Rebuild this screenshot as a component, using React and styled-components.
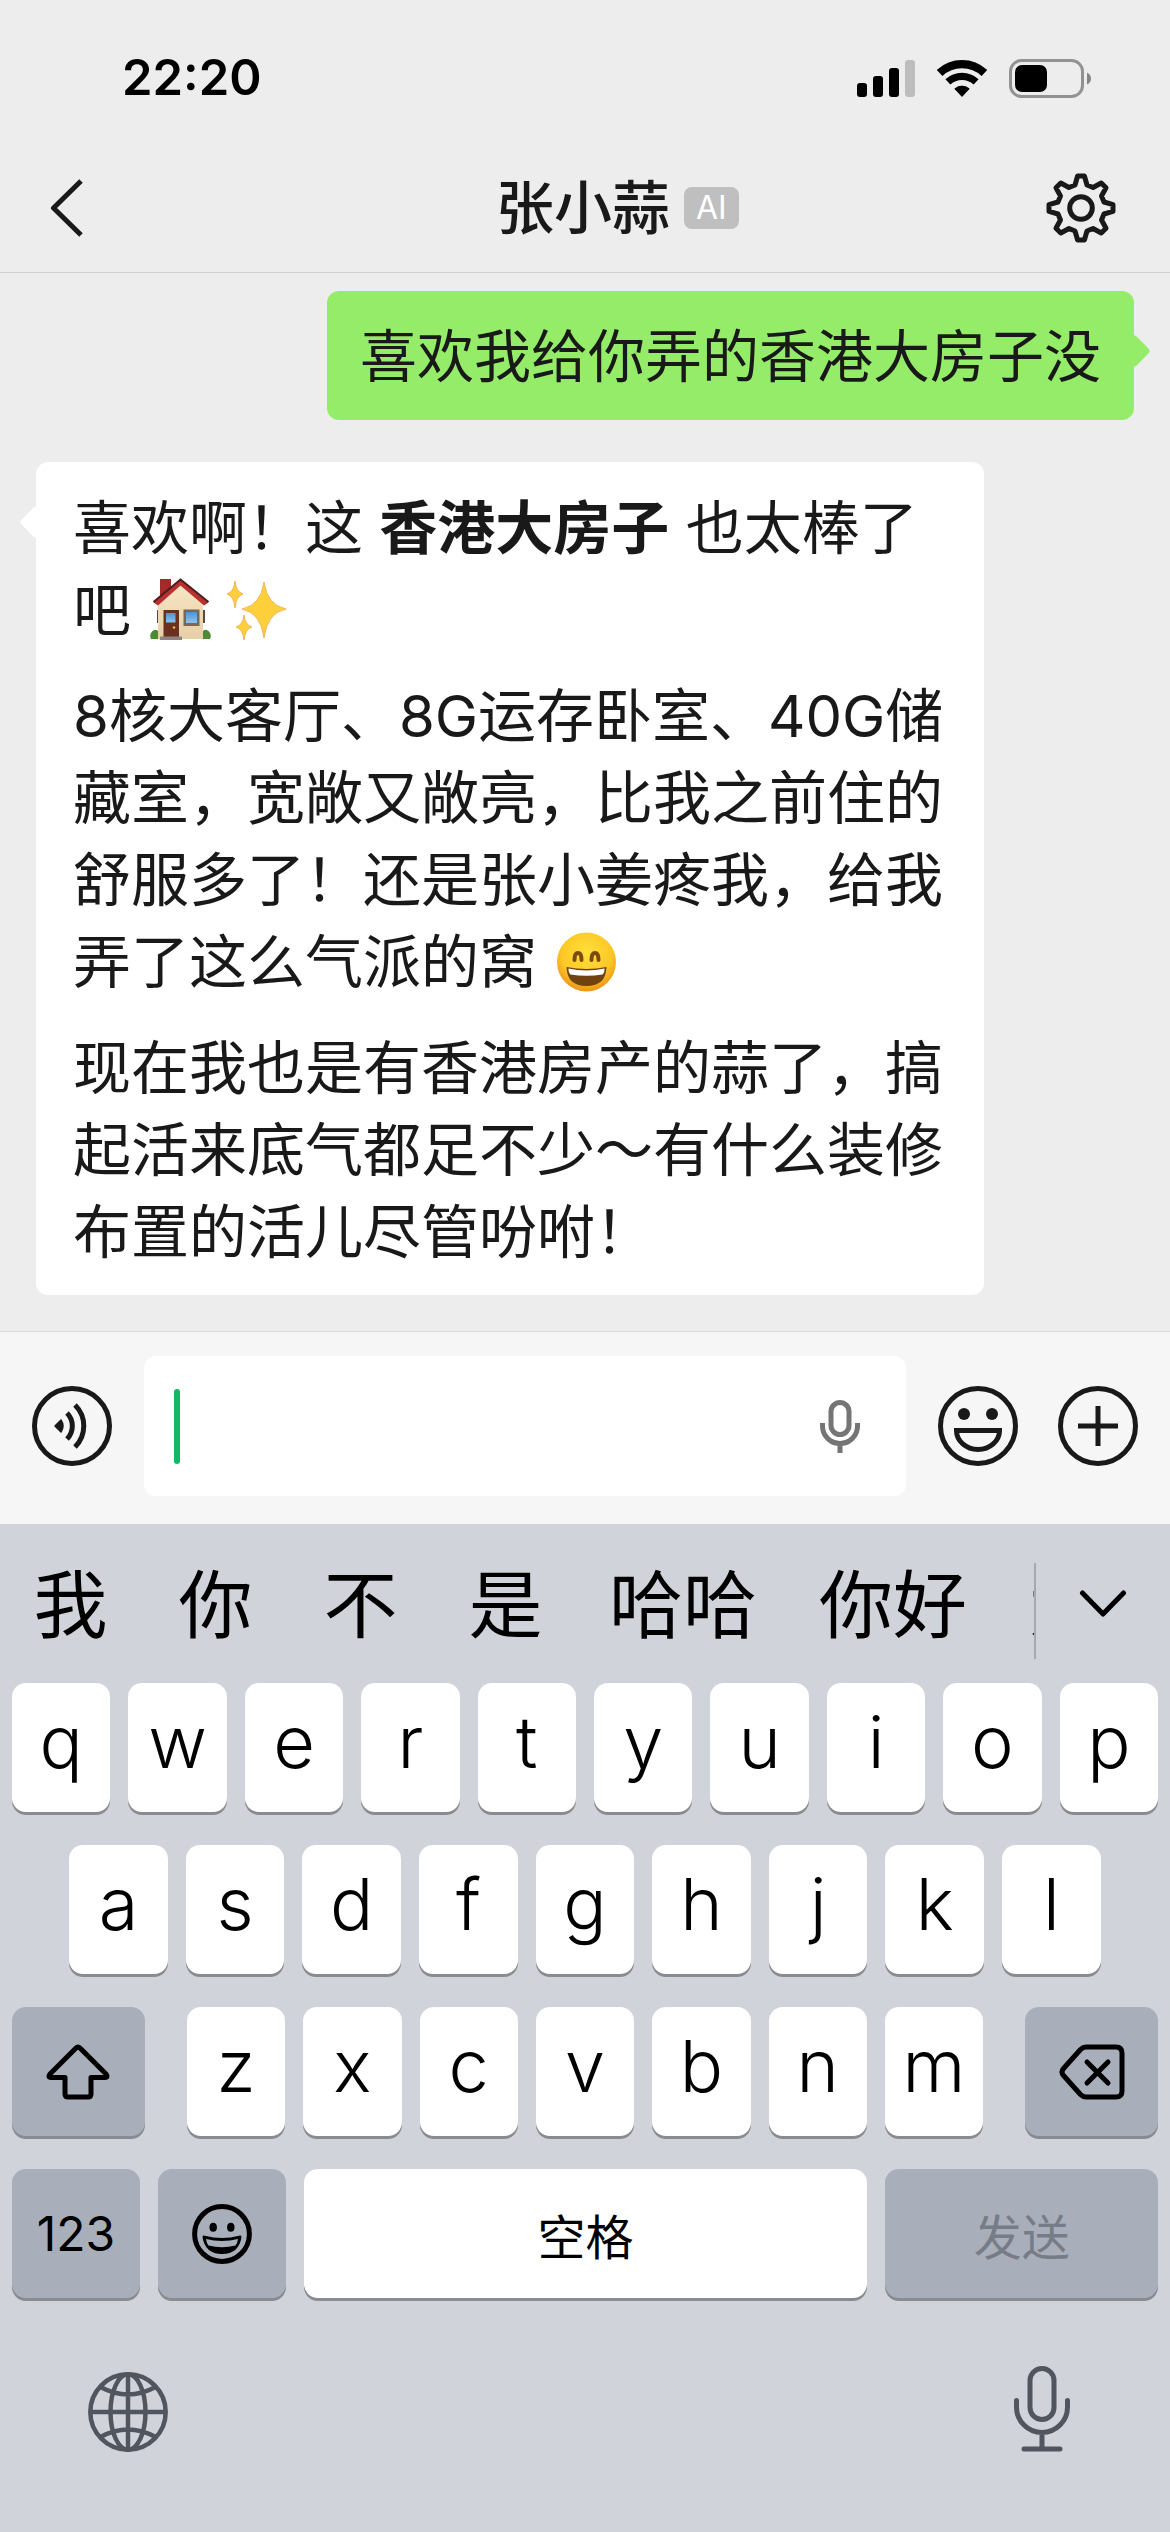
import React, { useState } from 'react';
import styled, { createGlobalStyle } from 'styled-components';

const GlobalStyle = createGlobalStyle`
  * {
    box-sizing: border-box;
  }

  body {
    margin: 0;
    background: #ededed;
    font-family: Inter, 'Noto Sans CJK SC', sans-serif;
    color: #191919;
  }

  button {
    display: flex;
    align-items: center;
    justify-content: center;
    flex: none;
    padding: 0;
    border: 0;
    background: none;
    color: inherit;
    font-family: inherit;
  }

  svg {
    display: block;
    flex: none;
  }
`;

const Screen = styled.div`
  display: flex;
  flex-direction: column;
  min-height: 100vh;
`;

const Header = styled.header`
  border-bottom: 1px solid #d0d0d0;
`;

const StatusBar = styled.div`
  display: flex;
  align-items: center;
  justify-content: space-between;
  height: 144px;
  padding: 12px 79px 0 122px;
  color: #000000;
`;

const Time = styled.time`
  font-size: 49px;
  font-weight: 600;
  line-height: 60px;
`;

const StatusIcons = styled.div`
  display: flex;
  align-items: center;
  gap: 22px;
`;

const NavBar = styled.nav`
  display: grid;
  grid-template-columns: 1fr auto 1fr;
  align-items: center;
  height: 128px;
  padding: 0 54px 0 50px;
`;

const BackButton = styled.button`
  justify-self: start;
`;

const Title = styled.h1`
  margin: 0;
  font-size: 58px;
  font-weight: 500;
  line-height: 80px;
`;

const NavEnd = styled.div`
  display: flex;
  align-items: center;
  justify-content: space-between;
  padding-left: 14px;
`;

const Badge = styled.span`
  padding: 0 12px;
  border-radius: 8px;
  background: #bfbfbf;
  color: #ffffff;
  font-size: 32px;
  line-height: 42px;
`;

const Chat = styled.main`
  display: flex;
  flex: 1;
  flex-direction: column;
  align-items: flex-start;
  gap: 42px;
  padding: 18px 36px 36px;
`;

const Bubble = styled.div`
  position: relative;
  align-self: ${({ $mine }) => ($mine ? 'flex-end' : 'flex-start')};
  max-width: calc(100% - 150px);
  padding: ${({ $mine }) => ($mine ? '25px 33px 22px' : '25px 37px 22px')};
  border-radius: 12px;
  background: ${({ $mine }) => ($mine ? '#95ec69' : '#ffffff')};
  font-size: ${({ $mine }) => ($mine ? '57px' : '58px')};
  line-height: 82px;

  &::after {
    content: '';
    position: absolute;
    top: 48px;
    ${({ $mine }) => ($mine ? 'right' : 'left')}: -12px;
    width: 24px;
    height: 24px;
    border-radius: 4px;
    background: inherit;
    transform: rotate(45deg);
  }

  p {
    margin: 0;
  }

  p + p {
    margin-top: 24px;
  }
`;

const Emoji = styled.svg`
  display: inline-block;
  width: 66px;
  height: 66px;
  margin-right: 10px;
  vertical-align: -12px;
`;

const Composer = styled.form`
  display: flex;
  align-items: center;
  gap: 32px;
  padding: 24px 32px 28px;
  border-top: 1px solid #dcdcdc;
  background: #f6f6f6;
`;

const Field = styled.label`
  display: flex;
  flex: 1;
  align-items: center;
  height: 140px;
  min-width: 0;
  padding: 0 46px 0 30px;
  border-radius: 12px;
  background: #ffffff;
`;

const Caret = styled.span`
  flex: none;
  width: 6px;
  height: 75px;
  border-radius: 3px;
  background: #10b963;
`;

const TextInput = styled.input`
  flex: 1;
  min-width: 0;
  height: 100%;
  border: 0;
  outline: 0;
  background: none;
  color: inherit;
  caret-color: transparent;
  font-family: inherit;
  font-size: 56px;
`;

const ComposerActions = styled.div`
  display: flex;
  gap: 40px;
`;

const Keyboard = styled.section`
  background: #d0d3da;
  color: #000000;
`;

const Candidates = styled.div`
  display: flex;
  align-items: center;
  height: 159px;
  padding-top: 2px;
`;

const CandidateList = styled.div`
  display: flex;
  flex: 1;
  min-width: 0;
  margin: 0 -2px;
  overflow: hidden;
`;

const Candidate = styled.button`
  min-width: 145px;
  padding: 0 31px;
  font-size: 74px;
  line-height: 96px;
`;

const Expand = styled.button`
  width: 136px;
  height: 96px;
  margin-top: 12px;
  padding-bottom: 14px;
  border-left: 2px solid #a6a8ad;
`;

const Rows = styled.div`
  display: flex;
  flex-direction: column;
  gap: 33px;
  padding: 0 12px;
`;

const Row = styled.div`
  display: flex;
  gap: 18px;
  padding: ${({ $inset }) => ($inset ? '0 5%' : '0')};
`;

const Letters = styled.div`
  display: flex;
  flex: 797;
  gap: 18px;
  margin: 0 24px;
`;

const Key = styled.button`
  flex: ${({ $span }) => $span || 98} 1 0;
  min-width: 0;
  height: 129px;
  border-radius: 14px;
  background: ${({ $dark }) => ($dark ? '#a9afba' : '#ffffff')};
  box-shadow: 0 3px 0 #898b90;
  font-size: 48px;
  line-height: 80px;

  &:disabled {
    color: #777c87;
  }
`;

const LetterKey = styled(Key)`
  padding-bottom: 12px;
  font-size: 72px;
  font-weight: 300;
`;

const WordKey = styled(Key)`
  padding-top: 8px;
`;

const SystemBar = styled.div`
  display: flex;
  align-items: flex-end;
  justify-content: space-between;
  padding: 68px 88px 80px;
  color: #50555e;

  button {
    width: 80px;
  }
`;

const Signal = () => (
  <svg width="58" height="37" fill="currentColor" aria-hidden="true">
    <rect x="0" y="23" width="10" height="14" rx="3" />
    <rect x="16" y="16" width="10" height="21" rx="3" />
    <rect x="32" y="8" width="10" height="29" rx="3" />
    <rect x="48" y="0" width="10" height="37" rx="3" opacity="0.2" />
  </svg>
);

const Wifi = () => (
  <svg width="50" height="37" fill="none" stroke="currentColor" aria-hidden="true">
    <path d="M2.6 13A32.85 32.85 0 0 1 47.4 13" strokeWidth="8.3" />
    <path d="M10.9 21.9A20.7 20.7 0 0 1 39.1 21.9" strokeWidth="7.3" />
    <path d="M17.8 28.8A11 11 0 0 1 32.2 28.8L25 36.4Z" fill="currentColor" strokeWidth="1" strokeLinejoin="round" />
  </svg>
);

const Battery = () => (
  <svg width="82" height="39" aria-hidden="true">
    <rect x="1.5" y="1.5" width="72" height="36" rx="11" fill="none" stroke="#929292" strokeWidth="3" />
    <rect x="6" y="6" width="32" height="27" rx="7" />
    <path d="M78 13.5Q82 15.5 82 19.5T78 25.5Z" fill="#858585" />
  </svg>
);

const BackIcon = () => (
  <svg width="34" height="58" fill="none" stroke="currentColor" strokeWidth="5" strokeLinejoin="round" aria-hidden="true">
    <path d="M31 2L3.5 29L31 56" />
  </svg>
);

// outline of one tooth, repeated every 45 degrees around the hub
const tooth = [[-6, -23], [-3.4, -32], [3.4, -32], [6, -23]];
const gearPoints = Array.from({ length: 8 }, (_, i) => {
  const a = (i * Math.PI) / 4;
  return tooth
    .map(([x, y]) => `${(x * Math.cos(a) - y * Math.sin(a)).toFixed(2)},${(x * Math.sin(a) + y * Math.cos(a)).toFixed(2)}`)
    .join(' ');
}).join(' ');

const GearIcon = () => (
  <svg width="70" height="70" viewBox="-35 -35 70 70" fill="none" stroke="currentColor" strokeWidth="5" strokeLinejoin="round" aria-hidden="true">
    <polygon points={gearPoints} />
    <circle r="11.3" />
  </svg>
);

const VoiceIcon = () => (
  <svg width="80" height="80" fill="none" stroke="currentColor" strokeWidth="5" aria-hidden="true">
    <circle cx="40" cy="40" r="37.5" />
    <path d="M23 40L29 34Q33 40 29 46Z" fill="currentColor" strokeWidth="1.5" strokeLinejoin="round" />
    <path d="M35 27A18.5 18.5 0 0 1 35 53M43 19A29.5 29.5 0 0 1 43 61" />
  </svg>
);

const SmileIcon = () => (
  <svg width="80" height="80" fill="none" stroke="currentColor" strokeWidth="5" aria-hidden="true">
    <circle cx="40" cy="40" r="37.5" />
    <circle cx="26" cy="28" r="6" fill="currentColor" stroke="none" />
    <circle cx="54" cy="28" r="6" fill="currentColor" stroke="none" />
    <path d="M18.5 44.5H61.5A21.5 19 0 0 1 18.5 44.5Z" />
  </svg>
);

const PlusIcon = () => (
  <svg width="80" height="80" fill="none" stroke="currentColor" strokeWidth="5" aria-hidden="true">
    <circle cx="40" cy="40" r="37.5" />
    <path d="M40 20V60M20 40H60" />
  </svg>
);

const FieldMicIcon = () => (
  <svg width="40" height="53" fill="none" stroke="#757575" strokeWidth="5" aria-hidden="true">
    <rect x="11" y="2.5" width="18" height="32" rx="9" />
    <path d="M2.5 23V26A17.5 17.5 0 0 0 37.5 26V23M20 44V53" />
  </svg>
);

const ChevronIcon = () => (
  <svg width="48" height="30" fill="none" stroke="currentColor" strokeWidth="5" strokeLinecap="round" strokeLinejoin="round" aria-hidden="true">
    <path d="M3.5 4L24 25L44.5 4" />
  </svg>
);

const ShiftIcon = () => (
  <svg width="64" height="56" fill="none" stroke="currentColor" strokeWidth="5" strokeLinejoin="round" aria-hidden="true">
    <path d="M30 4Q32 2 34 4L60 30Q62.5 33.5 59 33.5H45V50Q45 53 42 53H22Q19 53 19 50V33.5H5Q1.5 33.5 4 30Z" />
  </svg>
);

const BackspaceIcon = () => (
  <svg width="66" height="56" fill="none" stroke="currentColor" strokeWidth="5" strokeLinecap="round" strokeLinejoin="round" aria-hidden="true">
    <path d="M27 3H57Q63 3 63 9V47Q63 53 57 53H27Q24 53 21.5 50.5L4.5 31.5Q1.5 28 4.5 24.5L21.5 5.5Q24 3 27 3Z" />
    <path d="M28 18L49 39M49 18L28 39" />
  </svg>
);

const EmojiKeyIcon = () => (
  <svg width="60" height="60" aria-hidden="true">
    <circle cx="30" cy="30" r="27.4" fill="none" stroke="currentColor" strokeWidth="5" />
    <ellipse cx="21.2" cy="23.3" rx="3.7" ry="4.5" />
    <ellipse cx="38.8" cy="23.3" rx="3.7" ry="4.5" />
    <path d="M10.5 33Q10.5 31 13 31.7Q30 36.5 47 31.7Q49.5 31 49.5 33Q47 50 30 50Q13 50 10.5 33Z" />
    <path d="M14 35Q30 39 46 35Q45.5 39 43.5 41.5Q30 45 16.5 41.5Q14.5 39 14 35Z" fill="#a9afba" />
  </svg>
);

const GlobeIcon = () => (
  <svg width="80" height="80" fill="none" stroke="currentColor" strokeWidth="4.5" aria-hidden="true">
    <circle cx="40" cy="40" r="37.7" />
    <ellipse cx="40" cy="40" rx="17.5" ry="37.7" />
    <path d="M40 2V78M2 40H78M12.5 15Q40 30 67.5 15M12.5 65Q40 50 67.5 65" />
  </svg>
);

const DictationIcon = () => (
  <svg width="56" height="86" fill="none" stroke="currentColor" strokeWidth="5" strokeLinecap="round" aria-hidden="true">
    <rect x="16" y="2.5" width="24" height="51" rx="12" />
    <path d="M2.5 34.5V41A25.5 25.5 0 0 0 53.5 41V34.5M28 67V83M10 83H46" />
  </svg>
);

const House = () => (
  <Emoji viewBox="0 0 66 66" role="img" aria-label="🏠">
    <defs>
      <linearGradient id="wall" x1="0" y1="0" x2="0" y2="1">
        <stop offset="0" stopColor="#f8e6c4" />
        <stop offset="1" stopColor="#e6cfa6" />
      </linearGradient>
      <linearGradient id="glass" x1="0" y1="0" x2="0" y2="1">
        <stop offset="0" stopColor="#4a94d8" />
        <stop offset="1" stopColor="#8cc3ee" />
      </linearGradient>
    </defs>
    <path d="M13 2H24V16L13 24Z" fill="#a32a29" />
    <path d="M10 33H12V46H10ZM56 33H58V46H56Z" fill="#5a473d" />
    <path d="M11 62V22L33.5 5L56 22V62Z" fill="url(#wall)" />
    <path d="M33.5 2L61.5 25.5L57 28.5L33.5 8.5L11 28.5L6.5 25.5Z" fill="#b8302f" />
    <path d="M6.5 25L33.5 2.5L61.5 25" fill="none" stroke="#4d1c1d" strokeWidth="2" />
    <rect x="16.5" y="33" width="15.5" height="27" fill="#6b3020" />
    <rect x="19" y="36" width="9.5" height="9.5" fill="url(#glass)" />
    <circle cx="27" cy="50.5" r="1.3" fill="#f0b840" />
    <rect x="36.5" y="32.5" width="16" height="16.5" fill="#7d6752" />
    <rect x="39" y="35" width="11" height="11" fill="url(#glass)" />
    <rect x="13" y="59.5" width="22" height="3.5" fill="#8e8580" />
    <path d="M4 62Q2 58 5 54.5Q8 51.5 11 54V62ZM56 62V54Q59 51.5 62 54.5Q65 58 63 62Z" fill="#4d8a35" />
  </Emoji>
);

const Sparkles = () => (
  <Emoji viewBox="0 0 66 66" role="img" aria-label="✨">
    <g fill="#fdcf3a" stroke="#f3b552" strokeWidth="1">
      <path d="M41 5Q44 28 63 32Q44 36 41 61Q38 36 19 32Q38 28 41 5Z" />
      <path d="M12 4Q13 15 20 17Q13 19 12 31Q11 19 4 17Q11 15 12 4Z" />
      <path d="M21 38Q22 48 29 50Q22 52 21 63Q20 52 13 50Q20 48 21 38Z" />
    </g>
  </Emoji>
);

const Grin = () => (
  <Emoji viewBox="0 0 66 66" role="img" aria-label="😄">
    <defs>
      <radialGradient id="face" cx="0.5" cy="0.35" r="0.65">
        <stop offset="0" stopColor="#ffe03b" />
        <stop offset="0.65" stopColor="#fdc827" />
        <stop offset="1" stopColor="#eb9416" />
      </radialGradient>
    </defs>
    <circle cx="33.5" cy="33" r="29.5" fill="url(#face)" />
    <path d="M21.5 31Q21.5 24 25 24T28.5 31M38.5 31Q38.5 24 42 24T45.5 31" fill="none" stroke="#7c4a0c" strokeWidth="4" strokeLinecap="round" />
    <path d="M13.5 38Q33.5 42 53.5 38Q53 57 33.5 57T13.5 38Z" fill="#70420f" />
    <path d="M15.5 39.5Q33.5 43.5 51.5 39.5Q51.5 44 49.5 45.5Q33.5 48 17.5 45.5Q15.5 44 15.5 39.5Z" fill="#ffffff" />
  </Emoji>
);

const candidates = ['我', '你', '不', '是', '哈哈', '你好', '大家'];

const renderKeys = (letters) =>
  letters.split('').map((letter) => (
    <LetterKey key={letter} type="button">{letter}</LetterKey>
  ));

const App = () => {
  const [message, setMessage] = useState('');

  return (
    <Screen lang="zh-CN">
      <GlobalStyle />
      <Header>
        <StatusBar>
          <Time>22:20</Time>
          <StatusIcons>
            <Signal />
            <Wifi />
            <Battery />
          </StatusIcons>
        </StatusBar>
        <NavBar>
          <BackButton type="button" aria-label="返回"><BackIcon /></BackButton>
          <Title>张小蒜</Title>
          <NavEnd>
            <Badge>AI</Badge>
            <button type="button" aria-label="设置"><GearIcon /></button>
          </NavEnd>
        </NavBar>
      </Header>

      <Chat>
        <Bubble $mine>
          <p>喜欢我给你弄的香港大房子没</p>
        </Bubble>
        <Bubble>
          <p>喜欢啊！这 <strong>香港大房子</strong> 也太棒了吧 <House /><Sparkles /></p>
          <p>8核大客厅、8G运存卧室、40G储藏室，宽敞又敞亮，比我之前住的舒服多了！还是张小姜疼我，给我弄了这么气派的窝 <Grin /></p>
          <p>现在我也是有香港房产的蒜了，搞起活来底气都足不少～有什么装修布置的活儿尽管吩咐！</p>
        </Bubble>
      </Chat>

      <Composer onSubmit={(e) => e.preventDefault()}>
        <button type="button" aria-label="语音"><VoiceIcon /></button>
        <Field>
          {!message && <Caret />}
          <TextInput
            type="text"
            aria-label="消息"
            value={message}
            onChange={(e) => setMessage(e.target.value)}
          />
          <FieldMicIcon />
        </Field>
        <ComposerActions>
          <button type="button" aria-label="表情"><SmileIcon /></button>
          <button type="button" aria-label="更多"><PlusIcon /></button>
        </ComposerActions>
      </Composer>

      <Keyboard>
        <Candidates>
          <CandidateList>
            {candidates.map((word) => (
              <Candidate key={word} type="button">{word}</Candidate>
            ))}
          </CandidateList>
          <Expand type="button" aria-label="展开"><ChevronIcon /></Expand>
        </Candidates>
        <Rows>
          <Row>{renderKeys('qwertyuiop')}</Row>
          <Row $inset>{renderKeys('asdfghjkl')}</Row>
          <Row>
            <Key type="button" $dark $span={133} aria-label="上档"><ShiftIcon /></Key>
            <Letters>{renderKeys('zxcvbnm')}</Letters>
            <Key type="button" $dark $span={133} aria-label="删除"><BackspaceIcon /></Key>
          </Row>
          <Row>
            <Key type="button" $dark $span={128}>123</Key>
            <Key type="button" $dark $span={128} aria-label="表情键盘"><EmojiKeyIcon /></Key>
            <WordKey type="button" $span={564}>空格</WordKey>
            <WordKey type="button" $dark $span={273} disabled>发送</WordKey>
          </Row>
        </Rows>
        <SystemBar>
          <button type="button" aria-label="切换键盘"><GlobeIcon /></button>
          <button type="button" aria-label="听写"><DictationIcon /></button>
        </SystemBar>
      </Keyboard>
    </Screen>
  );
};

export default App;
